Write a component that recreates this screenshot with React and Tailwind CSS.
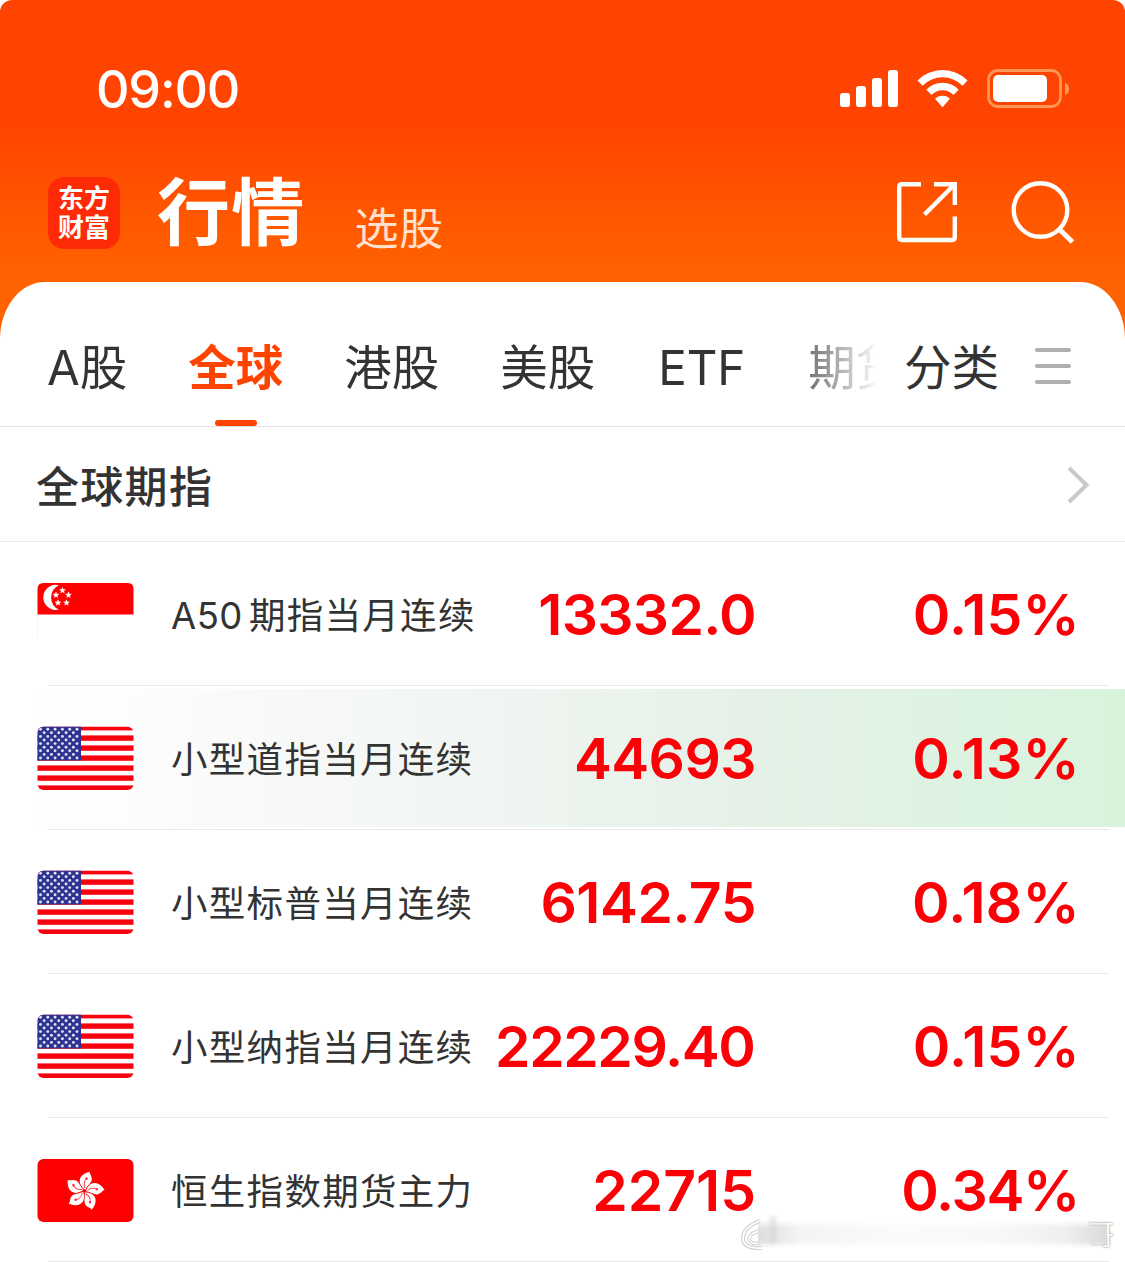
import React from 'react';

const TABS = ['A股', '全球', '港股', '美股', 'ETF', '期货'];

const QUOTES = [
  { flag: 'sg', prefix: 'A50', name: '期指当月连续', price: '13332.0', change: '0.15%', priceFit: 'tracking-[-0.7px]', changeFit: 'tracking-[0.2px]' },
  { flag: 'us', name: '小型道指当月连续', price: '44693', change: '0.13%', flash: true, priceFit: 'tracking-[-0.6px]', changeFit: 'tracking-[0.2px]' },
  { flag: 'us', name: '小型标普当月连续', price: '6142.75', change: '0.18%', priceFit: 'tracking-[-0.5px]', changeFit: 'tracking-[0.2px]' },
  { flag: 'us', name: '小型纳指当月连续', price: '22229.40', change: '0.15%', priceFit: 'tracking-[-1.4px] pr-[1.5px]', changeFit: 'tracking-[0.2px]' },
  { flag: 'hk', name: '恒生指数期货主力', price: '22715', change: '0.34%', priceFit: 'tracking-[0px]', changeFit: 'tracking-[-1.3px] pr-px' },
];

const STAR = 'M0 -3 L0.75 -1 L2.85 -0.9 L1.2 0.4 L1.75 2.4 L0 1.25 L-1.75 2.4 L-1.2 0.4 L-2.85 -0.9 L-0.75 -1 Z';

function SingaporeFlag() {
  const stars = [[25.5, 8.5], [19, 13], [31.5, 13], [21, 20.8], [29.5, 20.8]];
  return (
    <svg width="97" height="64" viewBox="0 0 97 64" className="block">
      <path d="M0.5 32.5 V7 Q0.5 1 6.5 1 H91 Q96.5 1 96.5 7 V32.5 Z" fill="#fe0000" />
      <path d="M22 3.2 A12.6 12.6 0 1 0 22 27.6 A13.4 13.4 0 0 1 22 3.2 Z" fill="#fff" />
      {stars.map(([x, y]) => (
        <path key={`${x}-${y}`} d={STAR} transform={`translate(${x} ${y})`} fill="#fff" stroke="#fff" strokeWidth="0.5" />
      ))}
      <path d="M0.5 33 V57" stroke="#f8f8f8" />
    </svg>
  );
}

function UsFlag() {
  const stars = [];
  for (let r = 0; r < 9; r++) {
    const n = r % 2 ? 5 : 6;
    for (let c = 0; c < n; c++) {
      stars.push([3.5 + c * 7.3 + (r % 2 ? 3.65 : 0), 3.2 + r * 3.6]);
    }
  }
  return (
    <svg width="97" height="64" viewBox="0 0 97 64" className="block">
      <defs>
        <clipPath id="us-round">
          <rect x="0.5" y="0.7" width="96" height="63.3" rx="6" />
        </clipPath>
      </defs>
      <g clipPath="url(#us-round)">
        <rect width="97" height="64" fill="#fff" />
        {[0, 1, 2, 3, 4, 5, 6].map(i => (
          <rect key={i} y={i * 10 - (i ? 0.6 : 0)} width="97" height={i ? 5.4 : 4.4} fill="#f9000f" />
        ))}
        <rect width="44" height="34.5" fill="#2d3390" />
        {stars.map(([x, y]) => (
          <circle key={`${x}-${y}`} cx={x} cy={y} r="1.45" fill="#dfe1f2" />
        ))}
      </g>
    </svg>
  );
}

function HongKongFlag() {
  return (
    <svg width="97" height="64" viewBox="0 0 97 64" className="block">
      <rect x="0.5" y="1" width="96" height="63" rx="6" fill="#fe0000" />
      {[0, 1, 2, 3, 4].map(i => (
        <g key={i} transform={`translate(47.5 33) rotate(${i * 72 + 12})`}>
          <path d="M0.5 -1.5 C-7 -4 -10 -12 -3 -17.5 C-1.5 -19 0.5 -19.4 1.2 -20.3 C0.8 -17.8 4.4 -16.6 4.8 -12.5 C5 -9 1.6 -6 0.5 -1.5 Z" fill="#fff" />
          <path d="M0 -3 Q-3.5 -8 -0.8 -12" fill="none" stroke="#fe3040" strokeWidth="0.9" />
          <circle cx="-0.5" cy="-12.5" r="1.3" fill="#fe3040" />
        </g>
      ))}
    </svg>
  );
}

const FLAGS = { sg: SingaporeFlag, us: UsFlag, hk: HongKongFlag };

function StatusIcons() {
  return (
    <svg width="230" height="40" viewBox="0 0 230 40" className="block">
      <g fill="#fff">
        <rect x="0" y="25" width="10" height="14" rx="2.8" />
        <rect x="16" y="18" width="10" height="21" rx="2.8" />
        <rect x="32" y="10" width="10" height="29" rx="2.8" />
        <rect x="48" y="2" width="10" height="37" rx="2.8" />
        <path d="M77.5 12.5 Q88 2 102.5 2 Q117 2 127.5 12.5 L122.5 17.8 Q114 9.2 102.5 9.2 Q91 9.2 82.5 17.8 Z" />
        <path d="M86.3 21.8 Q93 14.8 102.5 14.8 Q112 14.8 118.7 21.8 L113.5 27 Q109 22.3 102.5 22.3 Q96 22.3 91.5 27 Z" />
        <path d="M95 30.8 Q98 27.7 102.5 27.7 Q107 27.7 110 30.8 L102.5 39.3 Z" />
        <rect x="153" y="7" width="54" height="27" rx="5" />
      </g>
      <rect x="148.5" y="2.5" width="72" height="36" rx="9" fill="none" stroke="#ff9757" strokeWidth="2.8" />
      <path d="M225 14.5 Q229 16.5 229 21 Q229 25.5 225 27 Z" fill="#ff9757" />
    </svg>
  );
}

function ShareIcon() {
  return (
    <svg width="62" height="62" viewBox="0 0 62 62" fill="none" stroke="#fff" strokeWidth="4.4" className="block">
      <path d="M25 3.3 H6 Q3.2 3.3 3.2 6 V56 Q3.2 59 6 59 H56 Q58.8 59 58.8 56 V35.5" />
      <path d="M38 3.3 H58.8 V24" />
      <path d="M57 5 L28.5 33.5" />
    </svg>
  );
}

function SearchIcon() {
  return (
    <svg width="64" height="64" viewBox="0 0 64 64" fill="none" stroke="#fff" strokeWidth="4.4" className="block">
      <circle cx="29.5" cy="29" r="26.8" />
      <path d="M48 48 L61.5 61" strokeWidth="5" />
    </svg>
  );
}

function Header() {
  return (
    <header className="h-[342px] rounded-t-[12px] bg-[linear-gradient(#ff4300_0px,#ff4300_115px,#ff6200_275px)] text-white">
      <div className="flex justify-between pt-[68px] pl-24 pr-[55px]">
        <div className="font-['Inter'] text-[52px] leading-[44px] font-medium tracking-[-1.2px]">09:00</div>
        <StatusIcons />
      </div>
      <div className="mt-[58px] flex h-[86px] items-center pl-12 pr-[50px]">
        <div className="flex h-[72px] w-[72px] flex-col items-center justify-center rounded-2xl bg-[#ff2a06] pb-1 text-[26px] leading-[29px] font-bold">
          <span>东方</span>
          <span>财富</span>
        </div>
        <h1 className="-mt-[12px] ml-[37px] text-[73px] leading-[80px] font-bold tracking-[1.2px]">行情</h1>
        <span className="mt-[25px] ml-[49px] text-[44px] leading-[48px] tracking-[0.8px] text-[#ffe0cc]">选股</span>
        <div className="ml-auto flex gap-[53px]">
          <ShareIcon />
          <SearchIcon />
        </div>
      </div>
    </header>
  );
}

function TabBar() {
  return (
    <nav className="flex h-[145px] border-b border-[#e2e2e2] pl-12 pt-[50px] font-['Inter','Noto_Sans_CJK_SC',sans-serif] text-[47.5px] leading-[72px]">
      <div className="-ml-px flex w-[829px] gap-[61px] overflow-hidden whitespace-nowrap mask-[linear-gradient(to_right,#000_730px,transparent_832px)]">
        {TABS.map(tab => (
          <div key={tab} className={`flex shrink-0 flex-col items-center ${tab === '全球' ? 'font-bold text-[#ff4400]' : ''} ${tab === 'ETF' ? 'w-[91px]' : ''}`}>
            {tab}
            {tab === '全球' && <span className="mt-auto h-1.5 w-[42px] rounded-full bg-[#ff4400]" />}
          </div>
        ))}
      </div>
      <span className="ml-[28px] w-[95px]">分类</span>
      <div className="mt-4 ml-9 flex w-9 flex-col gap-3">
        <span className="h-1 rounded-full bg-[#b0b0b0]" />
        <span className="h-1 rounded-full bg-[#b0b0b0]" />
        <span className="h-1 rounded-full bg-[#b0b0b0]" />
      </div>
    </nav>
  );
}

function QuoteRow({ quote }) {
  const Flag = FLAGS[quote.flag];
  return (
    <li className="h-36 pt-[3px]">
      <div className={`flex h-[138px] items-center pl-[37px] pr-[45px] ${quote.flash ? 'bg-[linear-gradient(to_right,#fff_3%,#f2f6f3_40%,#e6f1e8_65%,#dcf3e1_88%,#d9f3db)]' : ''}`}>
        <Flag />
        <div className="ml-[37px] flex w-[311px] items-baseline gap-1.5 pt-1 font-['Inter','Noto_Sans_CJK_SC',sans-serif] text-[36.5px] whitespace-nowrap">
          {quote.prefix && <span className="tracking-[0.5px]">{quote.prefix}</span>}
          <span className="tracking-[1.3px]">{quote.name}</span>
        </div>
        <span className={`-ml-4 w-[290px] pt-0.5 text-right font-['Inter'] text-[57px] font-semibold text-[#fb0006] ${quote.priceFit}`}>{quote.price}</span>
        <span className={`ml-auto pt-0.5 font-['Inter'] text-[57px] font-semibold text-[#fb0006] ${quote.changeFit}`}>{quote.change}</span>
      </div>
      <div className="mt-0.5 ml-12 mr-4 h-px bg-[#e9e9e9]" />
    </li>
  );
}

function Watermark() {
  return (
    <div className="absolute top-[1214px] left-[740px] flex h-10 w-[378px] items-center">
      <svg width="46" height="40" viewBox="0 0 46 40" fill="none" className="block shrink-0">
        <path d="M20 7 Q3 13 3 25 Q4 35 22 34" stroke="#d2d2d2" strokeWidth="4" />
        <path d="M20 7 Q3 13 3 25 Q4 35 22 34" stroke="#fff" strokeWidth="1.8" />
        <path d="M28 17 Q11 16 9 25 Q11 31 20 29" stroke="#cecece" strokeWidth="3.6" />
        <path d="M28 17 Q11 16 9 25 Q11 31 20 29" stroke="#fff" strokeWidth="1.6" />
      </svg>
      <div className="-ml-7 h-7 flex-1 bg-[linear-gradient(to_right,#dedede,#f4f4f4_12%,#fbfbfb_40%,#f8f8f8_70%,#efefef_88%,#dadada)] mask-[linear-gradient(transparent,#000_30%,#000_75%,transparent)]" />
      <div className="absolute top-0.5 left-[30px] h-7 w-1.5 bg-[#d2d2d2] opacity-60 blur-[2px]" />
      <span className="-ml-5 w-[31px] text-[27px] leading-10 text-white [text-shadow:0_0_2px_#888,0_0_2px_#aaa]">哥</span>
    </div>
  );
}

export default function App() {
  return (
    <div className="relative h-[1262px] w-[1125px] overflow-hidden bg-white font-['Noto_Sans_CJK_SC',sans-serif] text-[#333]">
      <Header />
      <main className="-mt-[60px] rounded-t-[45px_57px] bg-white">
        <TabBar />
        <div className="flex h-[115px] items-center justify-between border-b border-[#e9e9e9] pl-9 pr-[34px]">
          <h2 className="text-[43px] font-medium tracking-[1.3px]">全球期指</h2>
          <svg width="24" height="40" viewBox="0 0 24 40" fill="none" stroke="#c9c9c9" strokeWidth="4" className="block">
            <path d="M2 4 L19.5 21 L2 38" />
          </svg>
        </div>
        <ul>
          {QUOTES.map(quote => (
            <QuoteRow key={quote.name} quote={quote} />
          ))}
        </ul>
      </main>
      <Watermark />
    </div>
  );
}
